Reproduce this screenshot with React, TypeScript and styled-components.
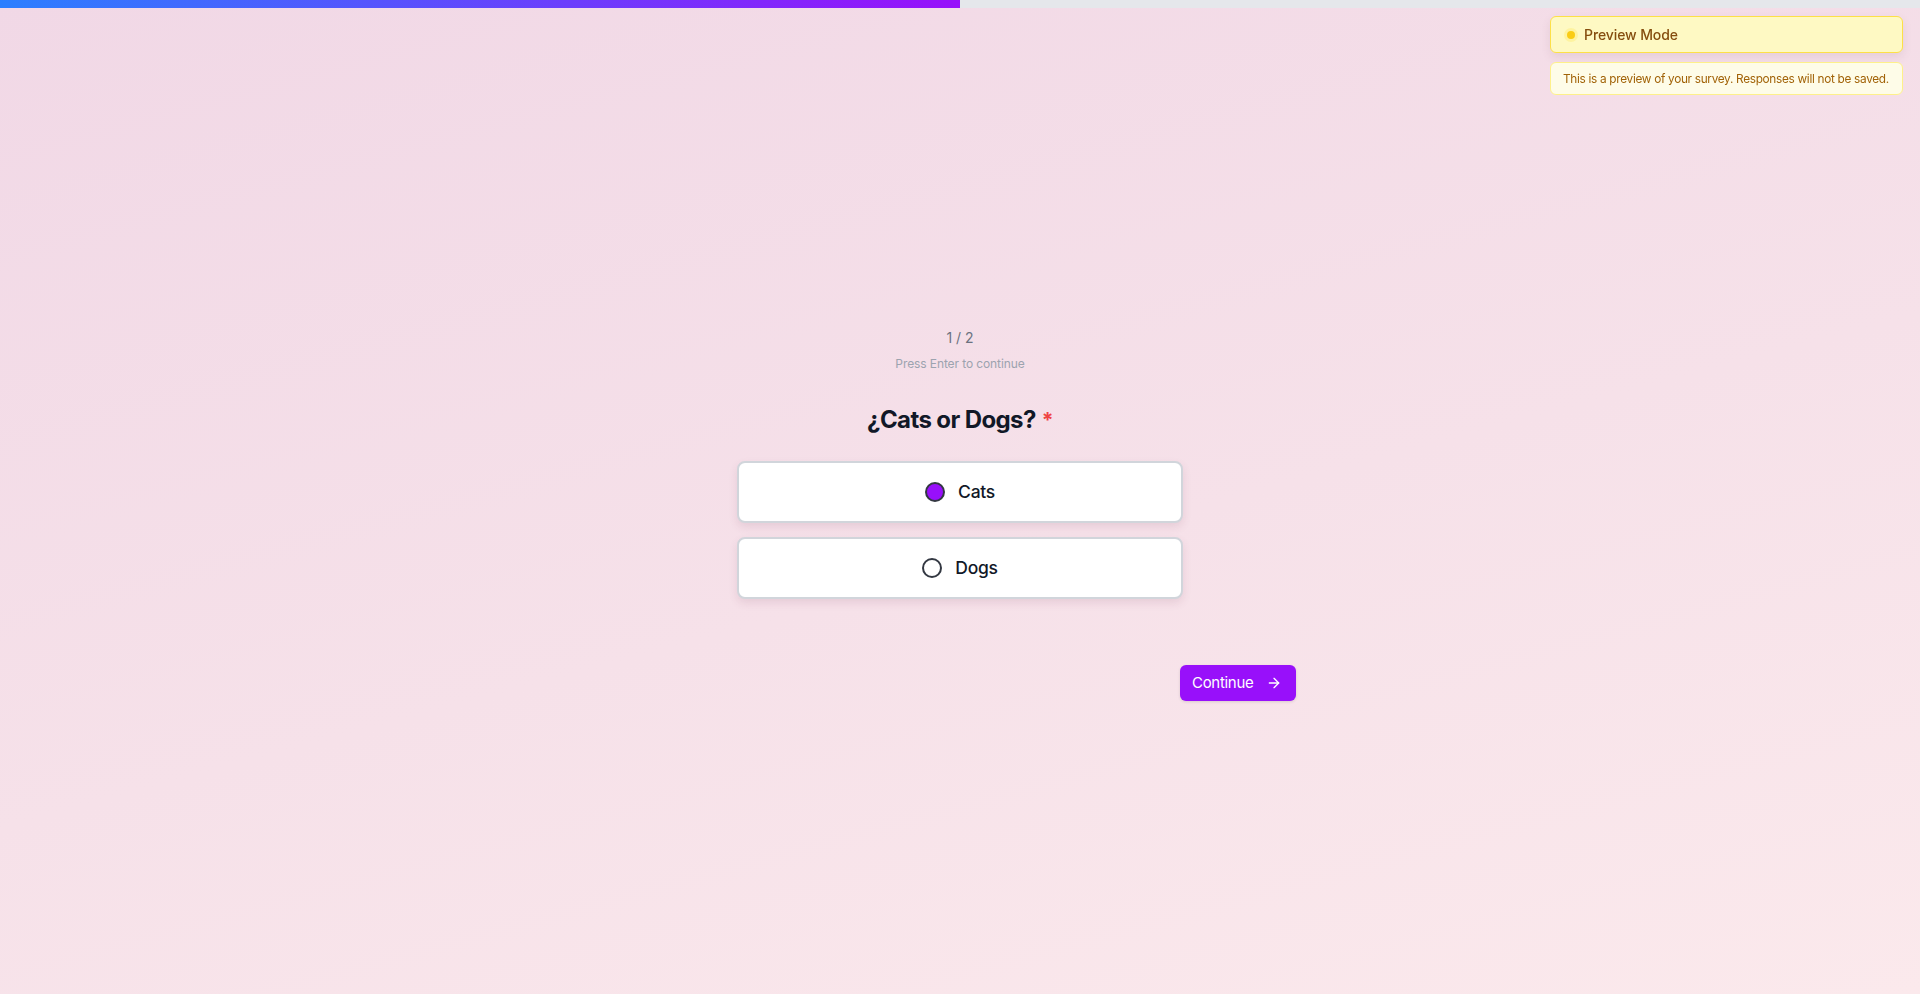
import * as React from 'react';
import { useState } from 'react';
import styled, { createGlobalStyle } from 'styled-components';
import { ArrowRight } from 'lucide-react';

const purple = '#9810fa';

const GlobalStyle = createGlobalStyle`
  * { box-sizing: border-box; }
  html, body { margin: 0; padding: 0; }
  body {
    font-family: Inter, "Noto Sans", "Liberation Sans", sans-serif;
    color: #111827;
  }
`;

const Page = styled.div`
  min-height: 100vh;
  display: flex;
  flex-direction: column;
  background: linear-gradient(165deg, #f1d8e6 0%, #f6e1e9 55%, #fbe9ec 100%);
`;

const ProgressTrack = styled.div`
  height: 8px;
  background: #e5e7eb;
  flex-shrink: 0;
`;

const ProgressFill = styled.div`
  height: 100%;
  background: linear-gradient(90deg, #2b7fff, ${purple});
`;

const Main = styled.main`
  flex: 1;
  display: flex;
  align-items: center;
  justify-content: center;
  padding-top: 26px;
`;

const Step = styled.div`
  width: 672px;
  display: flex;
  flex-direction: column;
  align-items: center;
`;

const Counter = styled.div`
  font-size: 14px;
  line-height: 20px;
  color: #6b7280;
`;

const Hint = styled.div`
  margin-top: 8px;
  font-size: 12px;
  line-height: 16px;
  letter-spacing: -0.1px;
  color: #9ca3af;
`;

const Title = styled.h1`
  margin: 32px 0 0;
  font-size: 24px;
  line-height: 32px;
  font-weight: 700;
  letter-spacing: -0.6px;
  color: #111827;
`;

const Required = styled.span`
  color: #ef4444;
  margin-left: 6px;
  font-size: 21px;
`;

const Options = styled.div`
  margin-top: 24px;
  width: 446px;
  display: flex;
  flex-direction: column;
  gap: 14px;
`;

const Option = styled.label`
  height: 62px;
  display: flex;
  align-items: center;
  justify-content: center;
  gap: 13px;
  background: #ffffff;
  border: 2px solid #d1d5db;
  border-radius: 8px;
  box-shadow: 0 4px 8px rgba(120, 60, 90, 0.12);
  cursor: pointer;
  font-size: 17.5px;
  font-weight: 500;
  letter-spacing: -0.3px;
  color: #111827;
`;

const Radio = styled.span<{ $checked: boolean }>`
  width: 20px;
  height: 20px;
  border-radius: 50%;
  border: 2px solid #333842;
  background: ${(p) => (p.$checked ? purple : '#ffffff')};
`;

const Actions = styled.div`
  align-self: stretch;
  display: flex;
  justify-content: flex-end;
  margin-top: 66px;
`;

const ContinueButton = styled.button`
  height: 36px;
  width: 116px;
  display: flex;
  align-items: center;
  justify-content: space-between;
  padding: 0 14px 0 12px;
  border: none;
  border-radius: 6px;
  background: ${purple};
  color: #ffffff;
  font-family: inherit;
  font-size: 15px;
  font-weight: 400;
  letter-spacing: -0.3px;
  box-shadow: 0 1px 3px rgba(0, 0, 0, 0.12);
  cursor: pointer;
`;

const Notice = styled.div`
  position: fixed;
  top: 16px;
  right: 17px;
  width: 353px;
  display: flex;
  flex-direction: column;
  gap: 9px;
`;

const NoticeHead = styled.div`
  height: 37px;
  display: flex;
  align-items: center;
  gap: 9px;
  padding: 0 16px;
  background: #fef9c3;
  border: 1px solid #fde047;
  border-radius: 6px;
  box-shadow: 0 4px 10px rgba(120, 80, 100, 0.12);
  color: #854d0e;
  font-size: 14px;
  font-weight: 500;
  letter-spacing: -0.1px;
`;

const Dot = styled.span`
  width: 8px;
  height: 8px;
  border-radius: 50%;
  background: #facc15;
  box-shadow: 0 0 0 3px #fef3a0;
`;

const NoticeBody = styled.div`
  height: 33px;
  display: flex;
  align-items: center;
  padding: 0 12px;
  background: #fefce8;
  border: 1px solid #fef08a;
  border-radius: 6px;
  color: #a16207;
  font-size: 11.8px;
  letter-spacing: -0.3px;
  white-space: nowrap;
`;

const choices = ['Cats', 'Dogs'];

export default function App() {
  const [answer, setAnswer] = useState('Cats');

  return (
    <Page>
      <GlobalStyle />
      <ProgressTrack>
        <ProgressFill style={{ width: '50%' }} />
      </ProgressTrack>
      <Main>
        <Step>
          <Counter>1 / 2</Counter>
          <Hint>Press Enter to continue</Hint>
          <Title>
            ¿Cats or Dogs?<Required>*</Required>
          </Title>
          <Options>
            {choices.map((c) => (
              <Option key={c} onClick={() => setAnswer(c)}>
                <Radio $checked={answer === c} />
                {c}
              </Option>
            ))}
          </Options>
          <Actions>
            <ContinueButton>
              Continue
              <ArrowRight size={16} strokeWidth={2} />
            </ContinueButton>
          </Actions>
        </Step>
      </Main>
      <Notice>
        <NoticeHead>
          <Dot />
          Preview Mode
        </NoticeHead>
        <NoticeBody>This is a preview of your survey. Responses will not be saved.</NoticeBody>
      </Notice>
    </Page>
  );
}
